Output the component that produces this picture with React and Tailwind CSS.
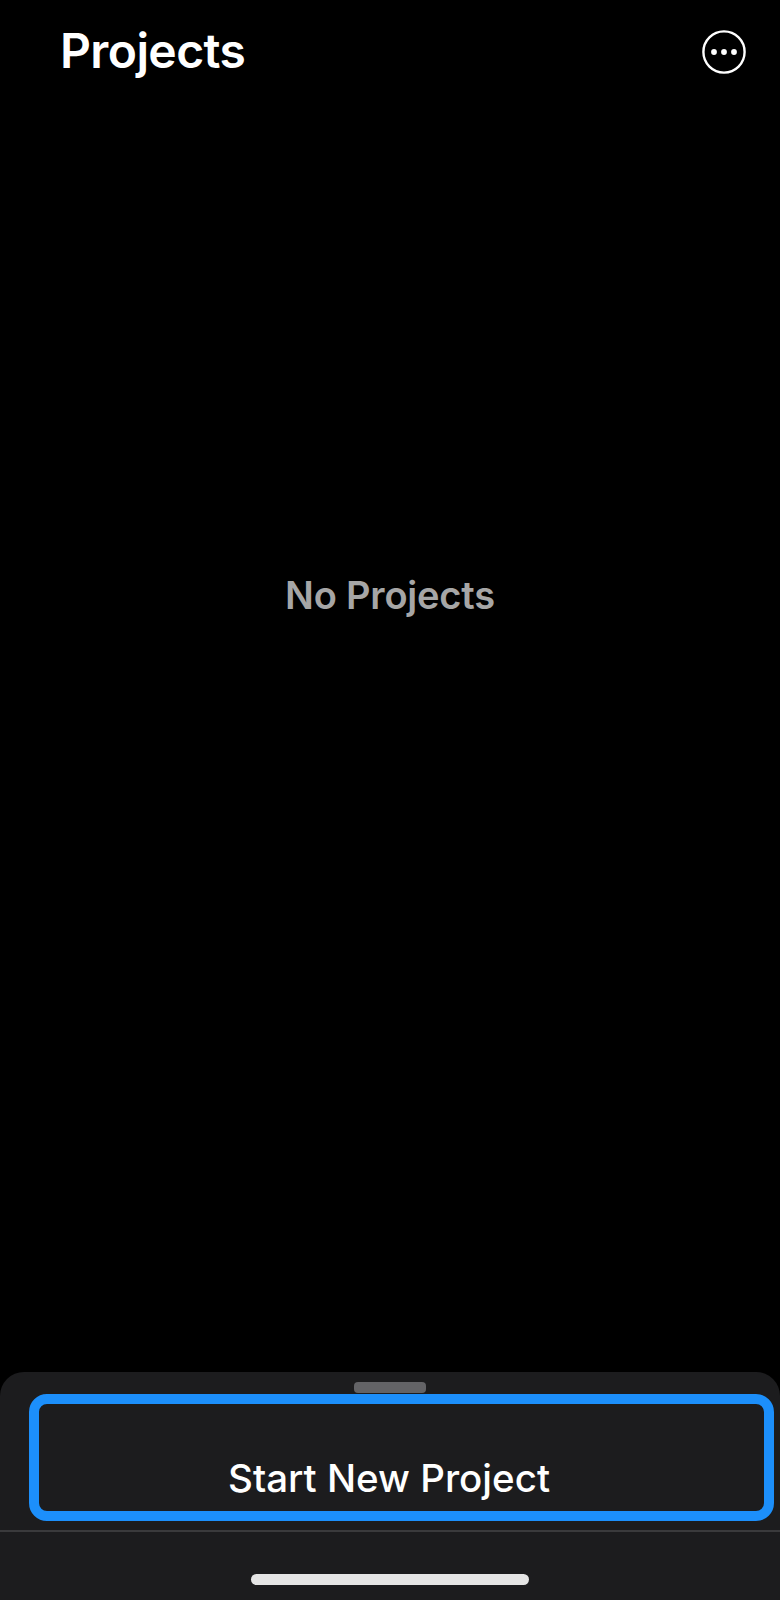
const FONT = 'font-["Inter","Liberation_Sans",sans-serif]';

function MoreIcon() {
  return (
    <svg width="44" height="44" viewBox="0 0 44 44" fill="none">
      <circle cx="22" cy="22" r="20.6" stroke="white" strokeWidth="2.4" />
      <circle cx="12" cy="22" r="2.9" fill="white" />
      <circle cx="22" cy="22" r="2.9" fill="white" />
      <circle cx="32" cy="22" r="2.9" fill="white" />
    </svg>
  );
}

export default function App() {
  return (
    <div className={`flex h-[1600px] w-[780px] flex-col overflow-hidden bg-black ${FONT}`}>
      <header className="flex items-center justify-between pt-[24px] pl-[60px] pr-[34px]">
        <h1 className="-mt-px text-[48px] leading-[56px] font-semibold tracking-[-0.6px] text-white">Projects</h1>
        <button type="button">
          <MoreIcon />
        </button>
      </header>

      <main className="flex flex-1 justify-center pt-[494px]">
        <p className="text-[38px] leading-[44px] font-semibold tracking-[-0.2px] text-[#a6a6a6]">No Projects</p>
      </main>

      <section className="flex h-[228px] flex-col rounded-t-[24px] bg-[#1c1c1e]">
        <div className="mx-auto mt-[10px] mb-px h-[11px] w-[72px] rounded-[4px] bg-[#636366]" />
        <button
          type="button"
          className="ml-[29px] mr-[6px] flex h-[127px] items-end justify-center rounded-[18px] border-[10px] border-[#1c8ffb] pr-[25px] pb-[9px] text-[38.5px] leading-[48px] font-medium text-white"
        >
          Start New Project
        </button>
        <div className="mt-[9px] h-[2px] bg-[#3a3a3c]" />
        <div className="mx-auto mt-[42px] h-[11px] w-[278px] rounded-full bg-[#e5e5e5]" />
      </section>
    </div>
  );
}
